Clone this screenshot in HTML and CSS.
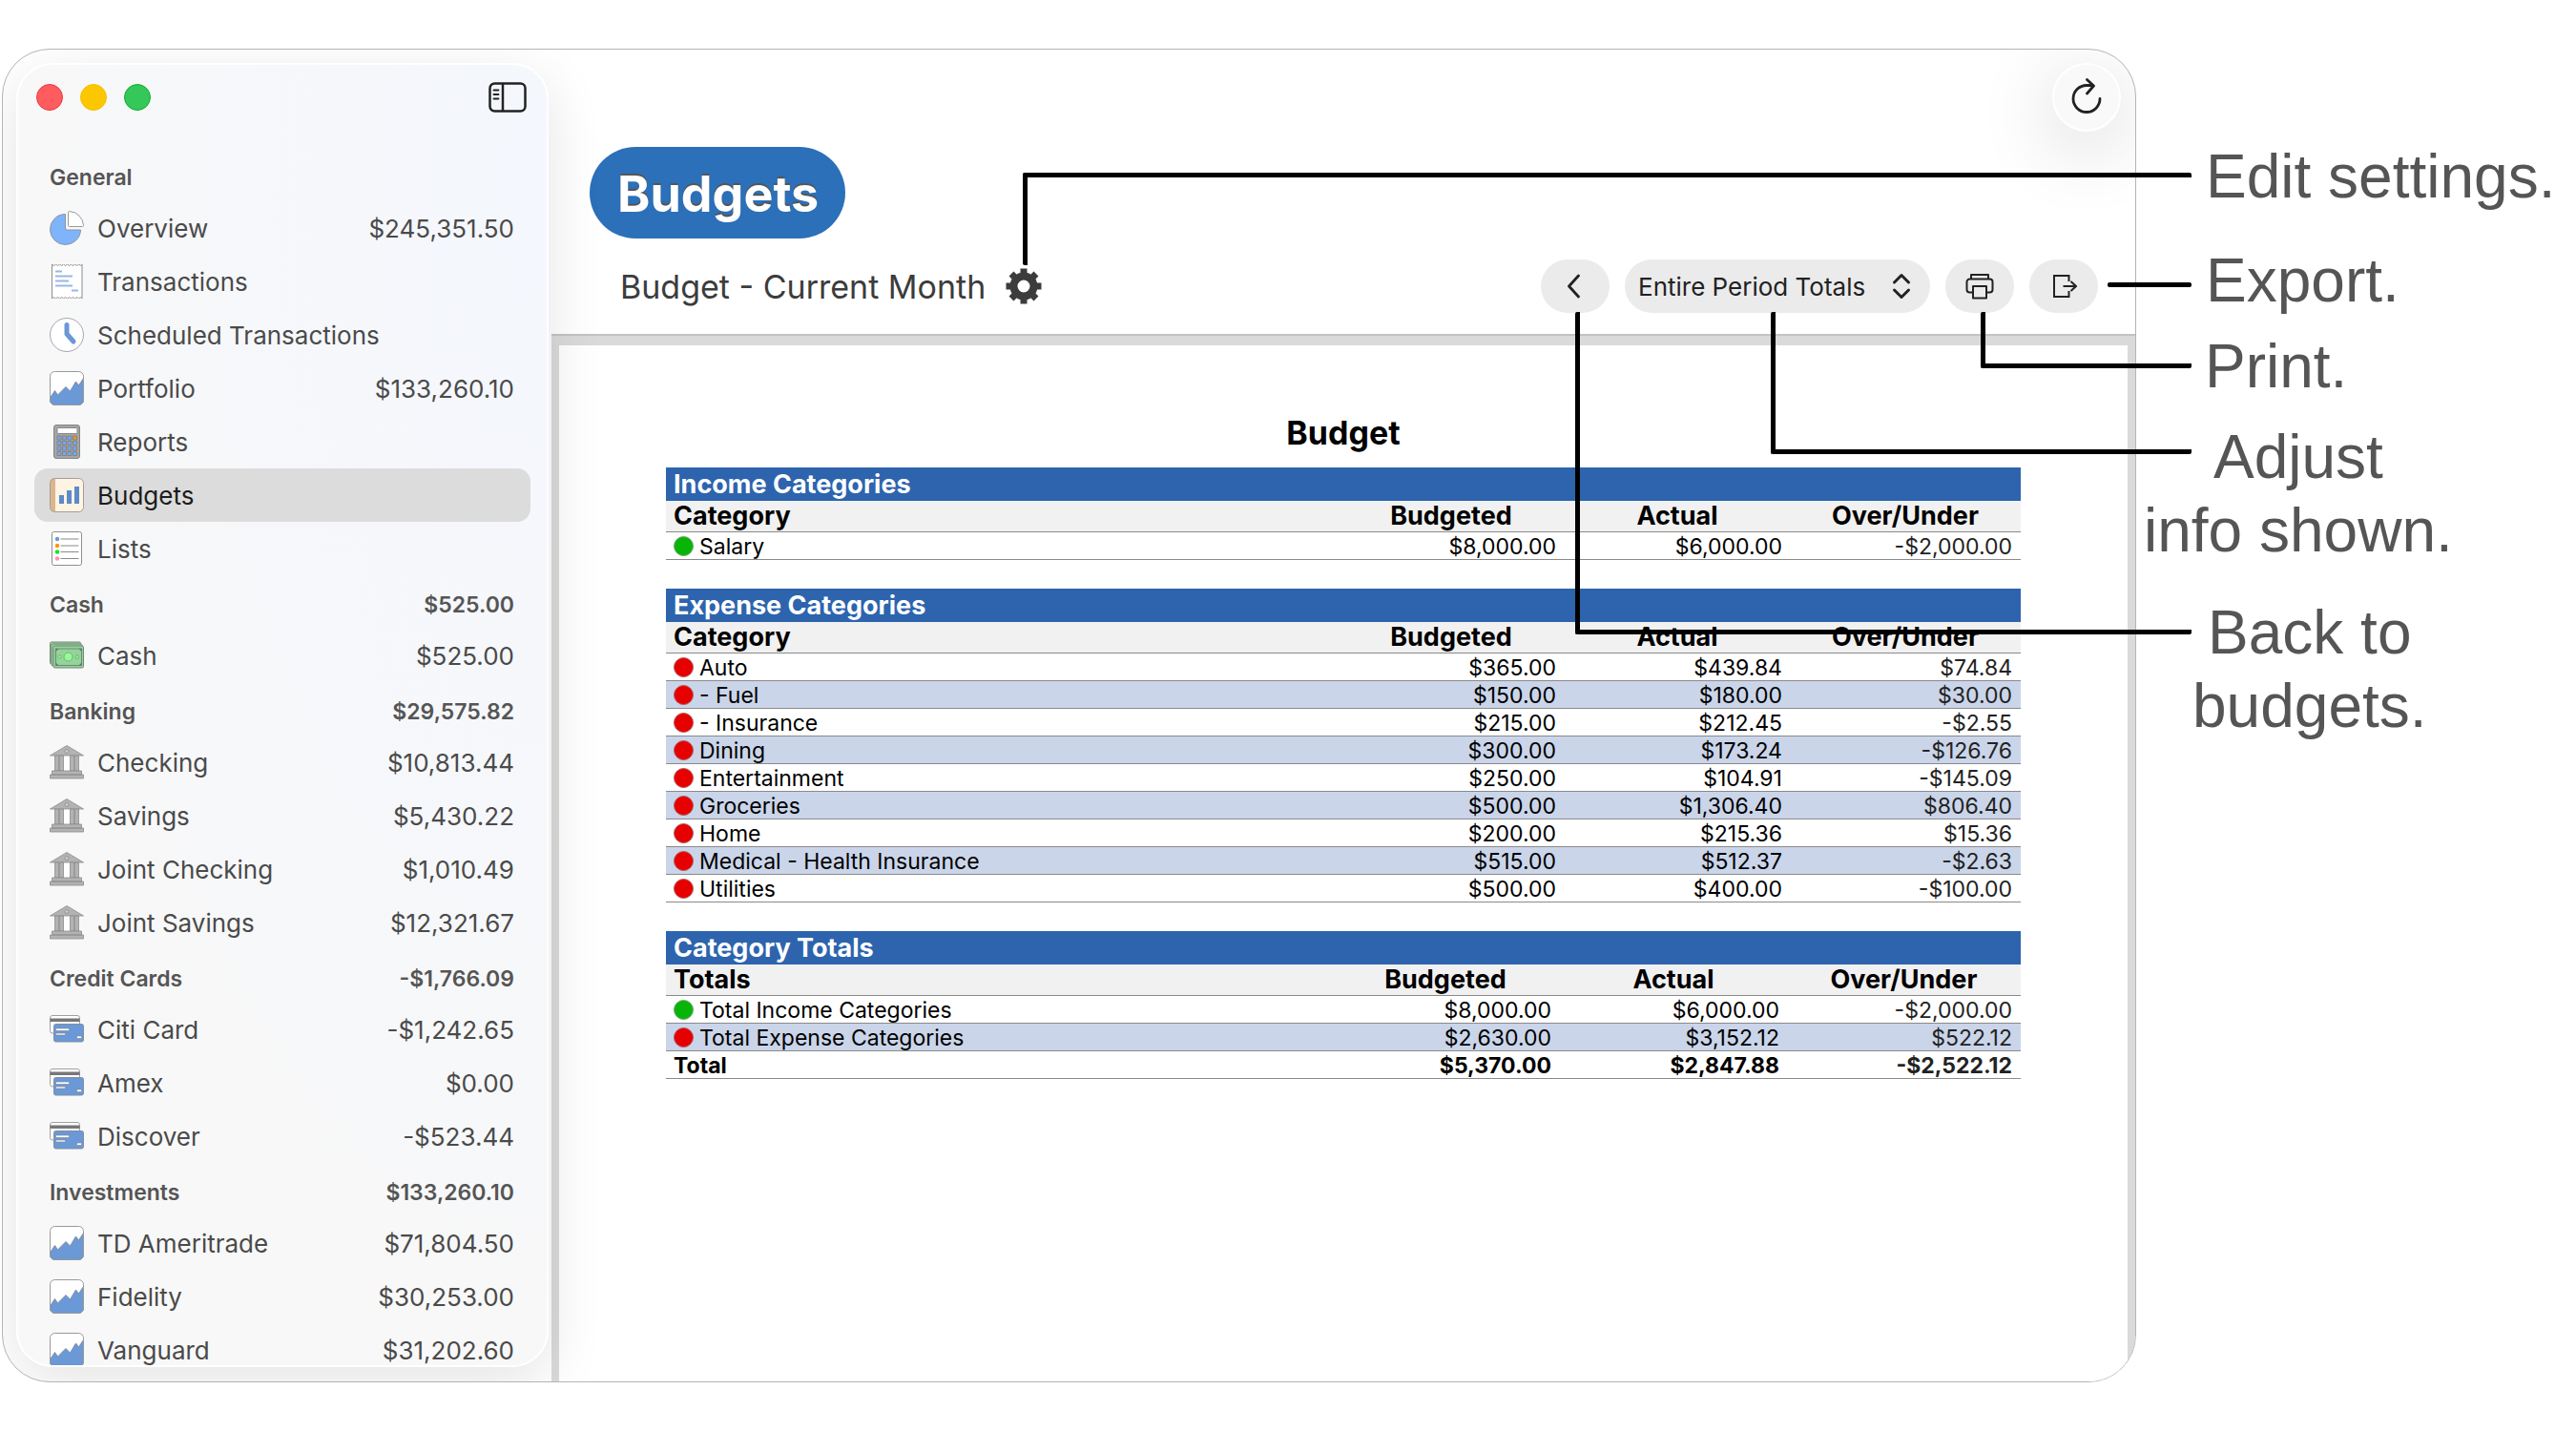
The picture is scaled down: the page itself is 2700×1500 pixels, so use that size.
FILE: index.html
```html
<!DOCTYPE html>
<html lang="en">
<head>
  <meta charset="UTF-8">
  <meta name="viewport" content="width=device-width, initial-scale=1.0">
  <title>Budgets</title>
  <link rel="stylesheet" href="styles.css">
</head>
<body>
  <!-- icon set -->
  <svg class="sprite" aria-hidden="true">
    <symbol id="i-overview" viewBox="0 0 36 36">
      <path d="M16 3.5a16 16 0 1 0 16.5 16.5H18.5a2 2 0 0 1-2-2V3.5z" fill="#7fb4fb" stroke="#8a93a0"/>
      <path d="M19.5 1.5c0-.6.4-1 1-1a15.500 15.500 0 0 1 15 15c0 .6-.4 1-1 1h-14c-.6 0-1-.4-1-1z" fill="#fff" stroke="#999"/>
    </symbol>
    <symbol id="i-transactions" viewBox="0 0 36 36">
      <path d="M2.500 0v36l2-1.500 2 1.500 2-1.500 2 1.500 2-1.500 2 1.500 2-1.500 2 1.500 2-1.500 2 1.500 2-1.500 2 1.500 2-1.500 2 1.500 2-1.500 1.500 1.500V0l-1.500 1.500-2-1.500-2 1.500-2-1.500-2 1.500-2-1.500-2 1.500-2-1.500-2 1.500-2-1.500-2 1.500-2-1.500-2 1.500-2-1.500-2 1.500z" fill="#fff" stroke="#8d8d8d"/>
      <path d="M6 7.500h7M6 12.500h18M6 17.500h14M6 22.500h18M23 27.500h7" stroke="#9ab7e2" stroke-width="2"/>
    </symbol>
    <symbol id="i-scheduled" viewBox="0 0 36 36">
      <circle cx="18" cy="18" r="17.500" fill="#fff" stroke="#a3a5b0"/>
      <path d="M18 7.500v9.500l7 8" fill="none" stroke="#6b98d6" stroke-width="5" stroke-linecap="round" stroke-linejoin="round"/>
    </symbol>
    <symbol id="i-portfolio" viewBox="0 0 36 36">
      <rect x=".5" y=".5" width="35" height="35" rx="5" fill="#fff"/>
      <path d="M.5 28l5-7.500 3 4.500 8.500-8.500 4.500 4.500 6-10 3 4 5-7.500V30.500a5 5 0 0 1-5 5h-25a5 5 0 0 1-5-5z" fill="#6b98d6" stroke="#8191a8"/>
      <rect x=".5" y=".5" width="35" height="35" rx="5" fill="none" stroke="#999"/>
    </symbol>
    <symbol id="i-reports" viewBox="0 0 36 36">
      <rect x="4.500" y=".5" width="27" height="35" rx="2.500" fill="#a5a5a5" stroke="#858585"/>
      <rect x="8" y="3.500" width="21" height="6" rx="1" fill="#fff" stroke="#888"/>
      <g fill="#70a8fa" stroke="#858585">
        <path d="M8 12h4v4H8zM13.500 12h4v4h-4zM19 12h4v4h-4z"/>
        <path d="M8 17.500h4v4H8zM13.500 17.500h4v4h-4zM19 17.500h4v4h-4zM24.500 17.500h4v4h-4z"/>
        <path d="M8 23h4v4H8zM13.500 23h4v4h-4zM19 23h4v4h-4zM24.500 23h4v4h-4z"/>
        <path d="M8 28.500h4v4H8zM13.500 28.500h4v4h-4zM19 28.500h4v4h-4zM24.500 28.500h4v4h-4z"/>
        <path d="M24.500 12h4v4h-4z" fill="#ff9500"/>
      </g>
    </symbol>
    <symbol id="i-budgets" viewBox="0 0 36 36">
      <rect x=".5" y=".5" width="35" height="35" rx="5" fill="#fff4e3"/>
      <path d="M6 .5v35H5a4.500 4.500 0 0 1-4.500-4.500V5A4.500 4.500 0 0 1 5 .5z" fill="#dab68e"/>
      <rect x=".5" y=".5" width="35" height="35" rx="5" fill="none" stroke="#a39d95"/>
      <path d="M10 18h5v9h-5zM18 13h5v14h-5zM26 9h5v18h-5z" fill="#5c8bc8"/>
    </symbol>
    <symbol id="i-lists" viewBox="0 0 36 36">
      <rect x="2.500" y=".5" width="31" height="35" rx="2" fill="#fff" stroke="#8d8d8d"/>
      <circle cx="8" cy="8" r="2.200" fill="#6b98d6"/>
      <circle cx="8" cy="15" r="2.200" fill="#ff9500"/>
      <circle cx="8" cy="21.500" r="2.200" fill="#0bea1d"/>
      <circle cx="8" cy="28.500" r="2.200" fill="#ff8fb5"/>
      <path d="M11.500 8h19M11.500 15h19M11.500 21.500h19M11.500 28.500h19" stroke="#8a8a8a" stroke-width="1.200"/>
    </symbol>
    <symbol id="i-cash" viewBox="0 0 36 36">
      <g fill="#94d49a" stroke="#738577">
        <rect x=".5" y="4" width="32" height="23" rx="1.500"/>
        <rect x="2" y="6" width="32" height="23" rx="1.500"/>
        <rect x="4" y="8" width="31.500" height="23" rx="1.500"/>
        <rect x="6.500" y="11" width="27" height="17.500"/>
      </g>
      <path d="M6.500 11h3l-3 3zM33.500 11h-3l3 3zM6.500 28.500h3l-3-3zM33.500 28.500h-3l3-3z" fill="#66756a"/>
      <circle cx="19.500" cy="19.500" r="4.500" fill="#94fa96" stroke="#6eb377"/>
      <circle cx="10.500" cy="19.500" r="1.700" fill="#94fa96" stroke="#6eb377"/>
      <circle cx="29" cy="19.500" r="1.700" fill="#94fa96" stroke="#6eb377"/>
    </symbol>
    <symbol id="i-bank" viewBox="0 0 36 36">
      <path d="M15 11h6v16h-6z" fill="#fff"/>
      <g fill="#b3b3b3" stroke="#8b8b8b" stroke-width=".8">
        <path d="M18 .5L35.500 11H.5z"/>
        <path d="M5.500 11h4v16h-4zM10.500 11h4v16h-4zM21.500 11h4v16h-4zM26.500 11h4v16h-4z"/>
        <path d="M2.500 27h31v4h-31zM.5 31h35v4H.5z"/>
        <circle cx="18" cy="6.500" r="2" fill="#ccc"/>
      </g>
    </symbol>
    <symbol id="i-card" viewBox="0 0 36 36">
      <rect x=".5" y="3.500" width="31" height="18.500" rx="2.500" fill="#fff" stroke="#a0a0a0"/>
      <path d="M.5 6.500h31v3.500H.5z" fill="#777"/>
      <rect x="4.500" y="12.500" width="31" height="18.500" rx="2" fill="#6b98d6" stroke="#7f8fa6"/>
      <g fill="#fff" stroke="#7f8a99" stroke-width=".7">
        <path d="M6.500 17h14v2.500h-14zM6.500 22h10v2h-10zM28.500 25h5v2.500h-5z"/>
      </g>
    </symbol>
  </svg>

  <div class="page">
    <div class="window">
      <div class="sidebar-wrap">
        <aside class="sidebar">
          <div class="titlebar">
            <div class="lights">
              <span class="light red"></span>
              <span class="light yellow"></span>
              <span class="light green"></span>
            </div>
            <button class="toggle" type="button" aria-label="Toggle sidebar">
              <svg viewBox="0 0 40 32" width="40" height="32" fill="none" stroke="#222" stroke-width="2.500">
                <rect x="1.500" y="1.500" width="37" height="29" rx="5"/>
                <path d="M15 1.500v29"/>
                <path d="M5.500 8.500h5M5.500 13h5M5.500 17.500h5" stroke-width="1.800" stroke-linecap="round"/>
              </svg>
            </button>
          </div>

          <nav class="nav">
            <div class="group"><span>General</span></div>
            <a class="item" href="#"><svg class="icon"><use href="#i-overview"/></svg><span>Overview</span><span class="amount">$245,351.50</span></a>
            <a class="item" href="#"><svg class="icon"><use href="#i-transactions"/></svg><span>Transactions</span></a>
            <a class="item" href="#"><svg class="icon"><use href="#i-scheduled"/></svg><span>Scheduled Transactions</span></a>
            <a class="item" href="#"><svg class="icon"><use href="#i-portfolio"/></svg><span>Portfolio</span><span class="amount">$133,260.10</span></a>
            <a class="item" href="#"><svg class="icon"><use href="#i-reports"/></svg><span>Reports</span></a>
            <a class="item active" href="#"><svg class="icon"><use href="#i-budgets"/></svg><span>Budgets</span></a>
            <a class="item" href="#"><svg class="icon"><use href="#i-lists"/></svg><span>Lists</span></a>

            <div class="group"><span>Cash</span><span>$525.00</span></div>
            <a class="item" href="#"><svg class="icon"><use href="#i-cash"/></svg><span>Cash</span><span class="amount">$525.00</span></a>

            <div class="group"><span>Banking</span><span>$29,575.82</span></div>
            <a class="item" href="#"><svg class="icon"><use href="#i-bank"/></svg><span>Checking</span><span class="amount">$10,813.44</span></a>
            <a class="item" href="#"><svg class="icon"><use href="#i-bank"/></svg><span>Savings</span><span class="amount">$5,430.22</span></a>
            <a class="item" href="#"><svg class="icon"><use href="#i-bank"/></svg><span>Joint Checking</span><span class="amount">$1,010.49</span></a>
            <a class="item" href="#"><svg class="icon"><use href="#i-bank"/></svg><span>Joint Savings</span><span class="amount">$12,321.67</span></a>

            <div class="group"><span>Credit Cards</span><span>-$1,766.09</span></div>
            <a class="item" href="#"><svg class="icon"><use href="#i-card"/></svg><span>Citi Card</span><span class="amount">-$1,242.65</span></a>
            <a class="item" href="#"><svg class="icon"><use href="#i-card"/></svg><span>Amex</span><span class="amount">$0.00</span></a>
            <a class="item" href="#"><svg class="icon"><use href="#i-card"/></svg><span>Discover</span><span class="amount">-$523.44</span></a>

            <div class="group"><span>Investments</span><span>$133,260.10</span></div>
            <a class="item" href="#"><svg class="icon"><use href="#i-portfolio"/></svg><span>TD Ameritrade</span><span class="amount">$71,804.50</span></a>
            <a class="item" href="#"><svg class="icon"><use href="#i-portfolio"/></svg><span>Fidelity</span><span class="amount">$30,253.00</span></a>
            <a class="item" href="#"><svg class="icon"><use href="#i-portfolio"/></svg><span>Vanguard</span><span class="amount">$31,202.60</span></a>
          </nav>
        </aside>
      </div>

      <main class="main">
        <div class="toolbar">
          <button class="refresh" type="button" aria-label="Refresh">
            <svg viewBox="0 0 36 40" width="36" height="40" fill="none" stroke="#222" stroke-width="2.800" stroke-linecap="round" stroke-linejoin="round">
              <path d="M32 21.500a14 14 0 1 1-14-14h6"/>
              <path d="M18.500 1.500l7 6.500-7 8"/>
            </svg>
          </button>
        </div>

        <h1 class="title">Budgets</h1>

        <div class="controls">
          <h2 class="subtitle">Budget - Current Month</h2>
          <button class="gear" type="button" aria-label="Edit settings">
            <svg viewBox="0 0 38 38" width="38" height="38">
              <circle cx="19" cy="19" r="10.500" fill="none" stroke="#3c3c3c" stroke-width="8"/>
              <g stroke="#3c3c3c" stroke-width="7" stroke-linejoin="round">
                <path d="M19 .5v7M19 30.500v7M.5 19h7M30.500 19h7"/>
                <path d="M6 6l5 5M27 27l5 5M32 6l-5 5M11 27l-5 5"/>
              </g>
            </svg>
          </button>

          <div class="actions">
            <button class="pill" type="button" aria-label="Back to budgets">
              <svg viewBox="0 0 18 26" width="18" height="26" fill="none" stroke="#222" stroke-width="2.800" stroke-linecap="round" stroke-linejoin="round"><path d="M12.500 2L2.500 13l10 11"/></svg>
            </button>
            <div class="period">
              <select id="period" aria-label="Info shown">
                <option>Entire Period Totals</option>
              </select>
              <svg class="updown" viewBox="0 0 20 28" width="20" height="28" fill="none" stroke="#222" stroke-width="3" stroke-linecap="round" stroke-linejoin="round"><path d="M2.500 10L10 2.500l7.500 7.500M2.500 18l7.500 7.500 7.500-7.500"/></svg>
            </div>
            <button class="pill" type="button" aria-label="Print">
              <svg viewBox="0 0 30 28" width="30" height="28" fill="none" stroke="#222" stroke-width="2" stroke-linejoin="round">
                <path d="M6 6.500V2h18v4.500"/>
                <path d="M8 20.500H4.500a3 3 0 0 1-3-3v-8a3 3 0 0 1 3-3h21a3 3 0 0 1 3 3v8a3 3 0 0 1-3 3H22"/>
                <path d="M8 14h14v12.500H8z"/>
              </svg>
            </button>
            <button class="pill" type="button" aria-label="Export">
              <svg viewBox="0 0 28 26" width="28" height="26" fill="none" stroke="#222" stroke-width="2">
                <path d="M19.500 8V2H4v22h15.500v-6"/>
                <path d="M13.500 13H27M21.500 8l5.500 5-5.500 5"/>
              </svg>
            </button>
          </div>
        </div>

        <div class="report">
          <div class="sheet">
            <h3 class="report-title">Budget</h3>

            <table>
              <colgroup><col><col class="num"><col class="num"><col class="diff"></colgroup>
              <thead>
                <tr class="band"><th colspan="4">Income Categories</th></tr>
                <tr class="cols"><th>Category</th><th>Budgeted</th><th>Actual</th><th>Over/Under</th></tr>
              </thead>
              <tbody>
                <tr><td><i class="dot ok"></i>Salary</td><td>$8,000.00</td><td>$6,000.00</td><td>-$2,000.00</td></tr>
              </tbody>
            </table>

            <table>
              <colgroup><col><col class="num"><col class="num"><col class="diff"></colgroup>
              <thead>
                <tr class="band"><th colspan="4">Expense Categories</th></tr>
                <tr class="cols"><th>Category</th><th>Budgeted</th><th>Actual</th><th>Over/Under</th></tr>
              </thead>
              <tbody>
                <tr><td><i class="dot"></i>Auto</td><td>$365.00</td><td>$439.84</td><td>$74.84</td></tr>
                <tr><td><i class="dot"></i>- Fuel</td><td>$150.00</td><td>$180.00</td><td>$30.00</td></tr>
                <tr><td><i class="dot"></i>- Insurance</td><td>$215.00</td><td>$212.45</td><td>-$2.55</td></tr>
                <tr><td><i class="dot"></i>Dining</td><td>$300.00</td><td>$173.24</td><td>-$126.76</td></tr>
                <tr><td><i class="dot"></i>Entertainment</td><td>$250.00</td><td>$104.91</td><td>-$145.09</td></tr>
                <tr><td><i class="dot"></i>Groceries</td><td>$500.00</td><td>$1,306.40</td><td>$806.40</td></tr>
                <tr><td><i class="dot"></i>Home</td><td>$200.00</td><td>$215.36</td><td>$15.36</td></tr>
                <tr><td><i class="dot"></i>Medical - Health Insurance</td><td>$515.00</td><td>$512.37</td><td>-$2.63</td></tr>
                <tr><td><i class="dot"></i>Utilities</td><td>$500.00</td><td>$400.00</td><td>-$100.00</td></tr>
              </tbody>
            </table>

            <table class="totals">
              <colgroup><col><col class="num"><col class="num"><col class="diff"></colgroup>
              <thead>
                <tr class="band"><th colspan="4">Category Totals</th></tr>
                <tr class="cols"><th>Totals</th><th>Budgeted</th><th>Actual</th><th>Over/Under</th></tr>
              </thead>
              <tbody>
                <tr><td><i class="dot ok"></i>Total Income Categories</td><td>$8,000.00</td><td>$6,000.00</td><td>-$2,000.00</td></tr>
                <tr><td><i class="dot"></i>Total Expense Categories</td><td>$2,630.00</td><td>$3,152.12</td><td>$522.12</td></tr>
                <tr class="sum"><td>Total</td><td>$5,370.00</td><td>$2,847.88</td><td>-$2,522.12</td></tr>
              </tbody>
            </table>
          </div>
        </div>
      </main>
    </div>

    <div class="callouts">
      <p class="note note-settings">Edit settings.</p>
      <p class="note note-export">Export.</p>
      <p class="note note-print">Print.</p>
      <p class="note note-info">Adjust<br>info shown.</p>
      <p class="note note-back">Back to<br>budgets.</p>
    </div>

    <!-- leader lines from the notes to the controls -->
    <span class="leader leader-settings"></span>
    <span class="leader leader-export"></span>
    <span class="leader leader-print"></span>
    <span class="leader leader-info"></span>
    <span class="leader leader-back"></span>
  </div>
</body>
</html>
```

FILE: styles.css
```css
:root {
  --blue: #2d64ad;
  --pill: #ebebeb;
  --text: #4a4a4a;
  --line: #8a8a8a;
}

* {
  box-sizing: border-box;
}

body {
  margin: 0;
  background: #fff;
  font-family: Inter, "Liberation Sans", sans-serif;
  color: #000;
}

h1, h2, h3, p {
  margin: 0;
}

button {
  padding: 0;
  border: none;
  background: none;
  cursor: pointer;
}

svg {
  display: block;
}

.sprite {
  position: absolute;
  width: 0;
  height: 0;
}

.page {
  position: relative;
  display: flex;
  min-height: 100vh;
}

/* window */
.window {
  flex: 1;
  display: flex;
  height: calc(100vh - 102px);
  min-height: 1200px;
  margin: 51px 4px 51px 2px;
  border: 1px solid #b4b4b4;
  border-radius: 50px;
  overflow: hidden;
  background: #fff;
}

/* sidebar */
.sidebar-wrap {
  position: relative;
  z-index: 1;
  width: 575px;
  padding: 14px 3px 15px 14px;
}

.sidebar {
  height: 100%;
  overflow: hidden;
  border: 2px solid #fff;
  border-radius: 38px;
  background: radial-gradient(ellipse at 100% 10%, #f4f7fd, #f8f8f8 75%);
  box-shadow: 0 16px 60px rgba(0, 0, 0, 0.11);
}

.titlebar {
  display: flex;
  align-items: center;
  justify-content: space-between;
  height: 68px;
  margin-bottom: 19px;
  padding: 0 21px 0 19px;
}

.lights {
  display: flex;
  gap: 18px;
}

.light {
  width: 28px;
  height: 28px;
  border: 1px solid;
  border-radius: 50%;
}

.red {
  background: #ff5c60;
  border-color: #e8383e;
}

.yellow {
  background: #fbc700;
  border-color: #f5bf00;
}

.green {
  background: #34c759;
  border-color: #14ae2e;
}

.nav {
  padding: 0 17px;
}

.group {
  display: flex;
  justify-content: space-between;
  height: 56px;
  padding: 6px 17px 0 16px;
  line-height: 50px;
  font-size: 23px;
  font-weight: 600;
  color: #555;
}

.item {
  display: flex;
  align-items: center;
  height: 56px;
  padding: 0 17px 0 16px;
  border-radius: 14px;
  font-size: 26px;
  color: var(--text);
  text-decoration: none;
}

.item.active {
  background: #dcdcdc;
  color: #1c1c1c;
}

.icon {
  width: 36px;
  height: 36px;
  margin-right: 14px;
}

.amount {
  margin-left: auto;
}

/* main area */
.main {
  flex: 1;
  display: flex;
  flex-direction: column;
}

.toolbar {
  display: flex;
  justify-content: flex-end;
  padding: 14px 15px 16px;
}

.refresh {
  display: flex;
  align-items: center;
  justify-content: center;
  width: 72px;
  height: 72px;
  border: 2px solid #fff;
  border-radius: 50%;
  background: #f9f9f9;
  box-shadow: 0 16px 80px rgba(0, 0, 0, 0.18);
}

.title {
  align-self: flex-start;
  height: 96px;
  margin-left: 40px;
  padding: 0 28px 0 29px;
  border-radius: 48px;
  background: #2b70b8;
  color: #fff;
  font-size: 52px;
  font-weight: 700;
  line-height: 100px;
  text-shadow: 0 -2px 0 #555;
}

.controls {
  display: flex;
  align-items: center;
  padding: 22px 39px 22px 72px;
}

.subtitle {
  font-size: 34px;
  font-weight: 400;
  color: #3c3c3c;
}

.gear {
  margin-left: 21px;
}

.actions {
  display: flex;
  gap: 16px;
  margin-left: auto;
}

.pill {
  display: flex;
  align-items: center;
  justify-content: center;
  width: 72px;
  height: 56px;
  border-radius: 28px;
  background: var(--pill);
}

.period {
  position: relative;
}

.period select {
  appearance: none;
  width: 320px;
  height: 56px;
  padding: 0 60px 0 14px;
  border: none;
  border-radius: 28px;
  background: var(--pill);
  color: #222;
  font-family: inherit;
  font-size: 26px;
}

.updown {
  position: absolute;
  top: 14px;
  right: 20px;
  pointer-events: none;
}

/* report */
.report {
  flex: 1;
  display: flex;
  padding: 10px 8px 0;
  border-top: 2px solid #c2c2c4;
  background: #dadadb;
}

.sheet {
  flex: 1;
  padding: 72px 112px 0;
  background: #fff;
}

.report-title {
  margin-bottom: 16px;
  font-size: 34px;
  font-weight: 700;
  line-height: 40px;
  text-align: center;
}

table {
  width: 100%;
  margin-bottom: 30px;
  border-collapse: separate;
  border-spacing: 0;
  table-layout: fixed;
}

.num {
  width: 237px;
}

.diff {
  width: 241px;
}

.totals .num {
  width: 239px;
}

.totals .diff {
  width: 244px;
}

th,
td {
  padding: 0 9px 0 8px;
  white-space: nowrap;
}

.band th {
  height: 35px;
  background: var(--blue);
  color: #fff;
  font-size: 27px;
  line-height: 34px;
  text-align: left;
}

.cols th {
  height: 33px;
  border-bottom: 1px solid var(--line);
  background: #f1f1f1;
  font-size: 27px;
  line-height: 32px;
}

.cols th:first-child {
  text-align: left;
}

td {
  height: 29px;
  padding-top: 2px;
  border-bottom: 1px solid var(--line);
  font-size: 23px;
  line-height: 26px;
  text-align: right;
}

td:first-child {
  text-align: left;
}

td:last-child {
  color: #222;
}

tbody tr:nth-child(even) td {
  background: #cad5e9;
}

.sum td {
  font-weight: 700;
}

.dot {
  display: inline-block;
  width: 21px;
  height: 21px;
  margin-right: 6px;
  border: 1px solid #b05a5a;
  border-radius: 50%;
  background: #e60000;
  vertical-align: -2px;
}

.dot.ok {
  border-color: #6fa56f;
  background: #08b408;
}

/* notes beside the window */
.callouts {
  width: 457px;
  padding-top: 147px;
}

.note {
  width: max-content;
  color: #555;
  font-family: "Liberation Sans", Arial, sans-serif;
  font-size: 64px;
  line-height: 77px;
  text-align: center;
}

.note-settings {
  margin: 0 0 32px 69px;
}

.note-export {
  margin: 0 0 13px 69px;
}

.note-print {
  margin: 0 0 18px 68px;
}

.note-info {
  margin: 0 0 30px 4px;
}

.note-back {
  margin-left: 55px;
}

.leader {
  position: absolute;
  right: 403px;
  border: 0 solid #000;
  border-radius: 2px;
}

.leader-settings {
  top: 181px;
  left: 1072px;
  height: 97px;
  border-width: 5px 0 0 5px;
}

.leader-export {
  top: 296px;
  width: 88px;
  border-top-width: 5px;
}

.leader-print,
.leader-info,
.leader-back {
  top: 327px;
  border-width: 0 0 5px 5px;
}

.leader-print {
  width: 221px;
  height: 59px;
}

.leader-info {
  width: 441px;
  height: 149px;
}

.leader-back {
  width: 646px;
  height: 338px;
}
```
